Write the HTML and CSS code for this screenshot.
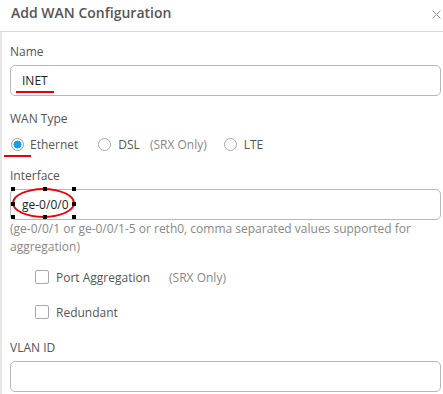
FILE: index.html
```html
<!DOCTYPE html>
<html lang="en">
<head>
    <meta charset="UTF-8">
    <meta name="viewport" content="width=device-width, initial-scale=1.0">
    <title>Add WAN Configuration</title>
    <link rel="stylesheet" href="styles.css">
</head>
<body>
    <div class="dialog">
        <div class="dialog-header">
            <h2 class="dialog-title">Add WAN Configuration</h2>
            <svg class="close" width="9" height="9" viewBox="0 0 9 9">
                <path d="M0.5 0.5 L8.5 8.5 M8.5 0.5 L0.5 8.5" stroke="#999" stroke-width="1" fill="none"/>
            </svg>
        </div>
        <div class="dialog-body">
            <div class="field">
                <div class="field-label">Name</div>
                <div class="input-box">
                    <span class="input-value">INET</span>
                    <span class="mark mark-name"></span>
                </div>
            </div>

            <div class="field field-type">
                <div class="field-label">WAN Type</div>
                <div class="radio-row">
                    <span class="radio-item item-eth">
                        <span class="radio checked"></span>
                        <span>Ethernet</span>
                        <span class="mark mark-radio"></span>
                    </span>
                    <span class="radio-item item-dsl">
                        <span class="radio"></span>
                        <span>DSL</span>
                        <span class="note">(SRX Only)</span>
                    </span>
                    <span class="radio-item">
                        <span class="radio"></span>
                        <span>LTE</span>
                    </span>
                </div>
            </div>

            <div class="field field-iface">
                <div class="field-label">Interface</div>
                <div class="input-box">
                    <span class="input-value">ge-0/0/0</span>
                    <span class="ellipse">
                        <i class="handle h-tl"></i><i class="handle h-tm"></i><i class="handle h-tr"></i>
                        <i class="handle h-ml"></i><i class="handle h-mr"></i>
                        <i class="handle h-bl"></i><i class="handle h-bm"></i><i class="handle h-br"></i>
                    </span>
                </div>
                <div class="hint">(ge-0/0/1 or ge-0/0/1-5 or reth0, comma separated values supported for aggregation)</div>
            </div>

            <div class="check-list">
                <div class="check-item">
                    <span class="checkbox"></span>
                    <span>Port Aggregation</span>
                    <span class="note">(SRX Only)</span>
                </div>
                <div class="check-item">
                    <span class="checkbox"></span>
                    <span>Redundant</span>
                </div>
            </div>

            <div class="field field-vlan">
                <div class="field-label">VLAN ID</div>
                <div class="input-box"></div>
            </div>
        </div>
    </div>
</body>
</html>
```

FILE: styles.css
```css
body {
    margin: 0;
    font-family: "Open Sans", Arial, sans-serif;
    color: #555;
    background: #fff;
}
.dialog {
    width: 443px;
    height: 394px;
    overflow: hidden;
}
.dialog-header {
    box-sizing: border-box;
    height: 32px;
    border-bottom: 1px solid #d9d9d9;
    display: flex;
    align-items: center;
    justify-content: space-between;
    padding: 0 2px 6px 11px;
}
.dialog-title {
    margin: 0;
    font-size: 14px;
    font-weight: 600;
    color: #555;
}
.close {
    margin-top: 4px;
}
.dialog-body {
    border-left: 2px solid #e6e6e6;
    padding: 12px 2px 0 8px;
    min-height: 362px;
}
.field-label {
    font-size: 12px;
    line-height: 16px;
    margin-bottom: 5px;
}
.input-box {
    position: relative;
    height: 29px;
    border: 1px solid #b8b8b8;
    border-radius: 5px;
    display: flex;
    align-items: center;
    padding-left: 11px;
}
.input-value {
    font-size: 12px;
    color: #222;
}
.field-type {
    margin-top: 15px;
}
.radio-row {
    display: flex;
    align-items: center;
    height: 16px;
    margin-top: 9px;
    font-size: 12px;
    color: #555;
}
.radio-item {
    position: relative;
    display: flex;
    align-items: center;
    gap: 7px;
}
.item-eth {
    gap: 6px;
    margin-right: 19px;
}
.item-dsl {
    margin-right: 16px;
}
.radio {
    box-sizing: border-box;
    width: 13px;
    height: 13px;
    border: 1px solid #aaa;
    border-radius: 50%;
    background: #fff;
    margin-left: 1px;
}
.radio.checked {
    border-color: #9a9a9a;
    background: radial-gradient(circle, #1a9ee8 0, #1a9ee8 3.8px, #fff 4.2px);
}
.note {
    color: #888;
    margin-left: 3px;
}
.field-iface {
    margin-top: 16px;
}
.hint {
    font-size: 12px;
    line-height: 18px;
    color: #888;
}
.check-list {
    padding-left: 25px;
    margin-top: 14px;
}
.check-item {
    display: flex;
    align-items: center;
    gap: 7px;
    font-size: 12px;
    height: 14px;
    margin-bottom: 21px;
}
.checkbox {
    box-sizing: border-box;
    width: 14px;
    height: 14px;
    border: 1px solid #aaa;
    border-radius: 2px;
    background: #fff;
}
.check-item .note {
    margin-left: 12px;
}
.field-vlan {
    margin-top: 12px;
}

/* red annotations drawn over the form */
.mark {
    position: absolute;
    height: 2px;
    background: #e00;
}
.mark-name {
    left: 5px;
    top: 25px;
    width: 38px;
}
.mark-radio {
    left: -6px;
    top: 19px;
    width: 27px;
}
.ellipse {
    position: absolute;
    left: 1px;
    top: -2px;
    width: 59px;
    height: 26px;
    border: 2px solid #e00;
    border-radius: 50%;
}
.handle {
    position: absolute;
    width: 4px;
    height: 4px;
    background: #000;
}
.h-tl { left: -3px; top: -3px; }
.h-tm { left: 29px; top: -3px; }
.h-tr { right: -3px; top: -3px; }
.h-ml { left: -3px; top: 12px; }
.h-mr { right: -3px; top: 12px; }
.h-bl { left: -3px; bottom: -3px; }
.h-bm { left: 29px; bottom: -3px; }
.h-br { right: -3px; bottom: -3px; }
```
